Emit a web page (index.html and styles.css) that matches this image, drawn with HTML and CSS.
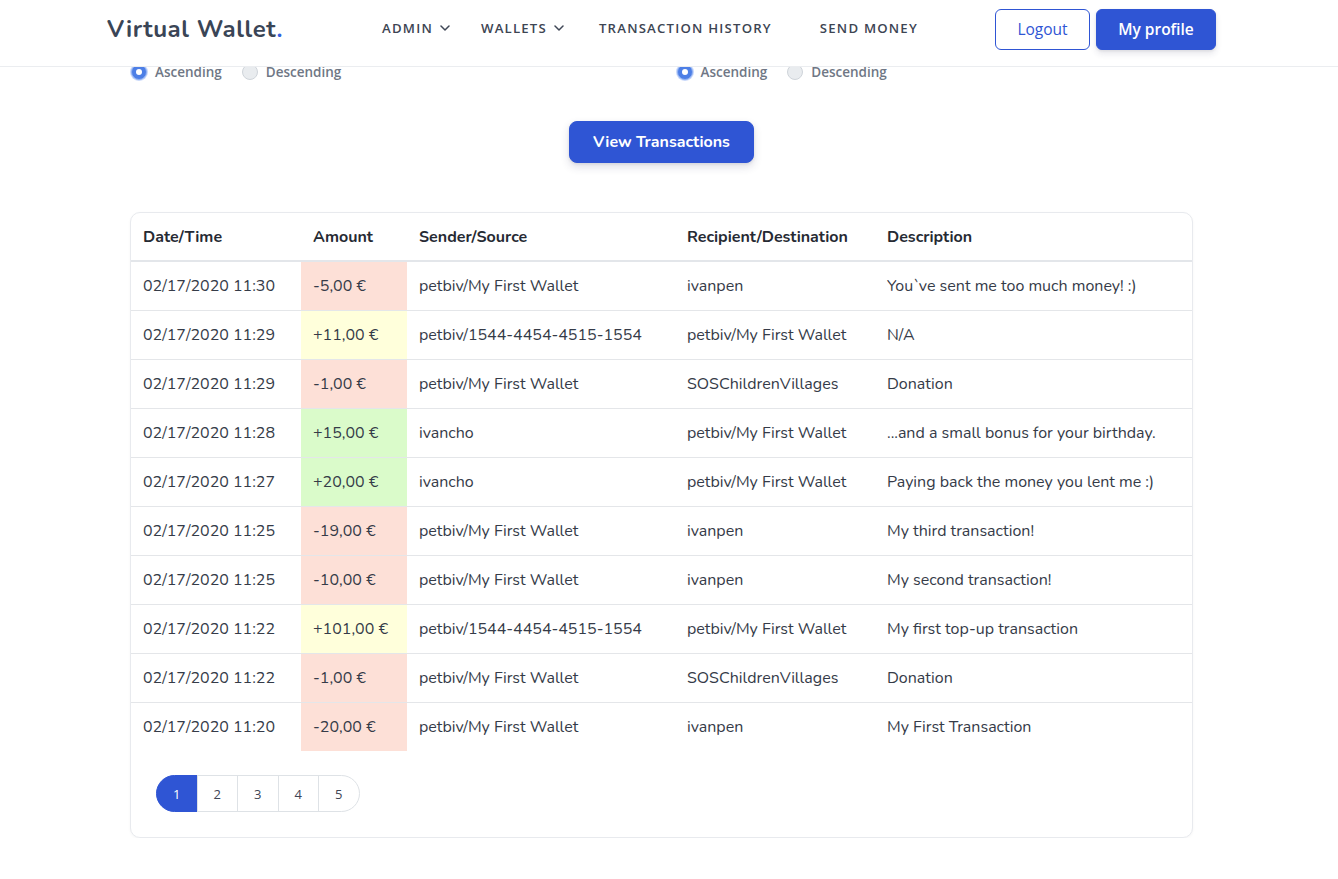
FILE: index.html
```html
<!DOCTYPE html>
<html lang="en">
<head>
<meta charset="utf-8">
<title>Virtual Wallet - Transaction History</title>
<link rel="stylesheet" href="styles.css">
</head>
<body>
<header class="topbar">
  <a class="brand">Virtual Wallet<span class="brand-dot">.</span></a>
  <nav class="mainnav">
    <a class="nav-item nav-admin">ADMIN <svg class="chev" viewBox="0 0 10 6" width="10" height="6"><path d="M1 1 L5 5 L9 1" fill="none" stroke="currentColor" stroke-width="1.5" stroke-linecap="round" stroke-linejoin="round"/></svg></a>
    <a class="nav-item nav-wallets">WALLETS <svg class="chev" viewBox="0 0 10 6" width="10" height="6"><path d="M1 1 L5 5 L9 1" fill="none" stroke="currentColor" stroke-width="1.5" stroke-linecap="round" stroke-linejoin="round"/></svg></a>
    <a class="nav-item nav-history">TRANSACTION HISTORY</a>
    <a class="nav-item nav-send">SEND MONEY</a>
  </nav>
  <div class="actions">
    <button class="btn btn-outline">Logout</button>
    <button class="btn btn-primary btn-profile">My profile</button>
  </div>
</header>

<main class="content">
  <div class="sort-row">
    <div class="sort-group">
      <label class="radio"><span class="radio-dot checked"></span>Ascending</label>
      <label class="radio"><span class="radio-dot"></span>Descending</label>
    </div>
    <div class="sort-group second">
      <label class="radio"><span class="radio-dot checked"></span>Ascending</label>
      <label class="radio"><span class="radio-dot"></span>Descending</label>
    </div>
  </div>

  <div class="view-wrap">
    <button class="btn btn-primary btn-view">View Transactions</button>
  </div>

  <section class="card">
    <table class="tx-table">
      <colgroup>
        <col class="c-date"><col class="c-amount"><col class="c-sender"><col class="c-recipient"><col class="c-desc">
      </colgroup>
      <thead>
        <tr><th>Date/Time</th><th>Amount</th><th>Sender/Source</th><th>Recipient/Destination</th><th>Description</th></tr>
      </thead>
      <tbody>
        <tr><td>02/17/2020 11:30</td><td class="amt neg">-5,00 €</td><td>petbiv/My First Wallet</td><td>ivanpen</td><td>You`ve sent me too much money! :)</td></tr>
        <tr><td>02/17/2020 11:29</td><td class="amt top">+11,00 €</td><td>petbiv/1544-4454-4515-1554</td><td>petbiv/My First Wallet</td><td>N/A</td></tr>
        <tr><td>02/17/2020 11:29</td><td class="amt neg">-1,00 €</td><td>petbiv/My First Wallet</td><td>SOSChildrenVillages</td><td>Donation</td></tr>
        <tr><td>02/17/2020 11:28</td><td class="amt pos">+15,00 €</td><td>ivancho</td><td>petbiv/My First Wallet</td><td>...and a small bonus for your birthday.</td></tr>
        <tr><td>02/17/2020 11:27</td><td class="amt pos">+20,00 €</td><td>ivancho</td><td>petbiv/My First Wallet</td><td>Paying back the money you lent me :)</td></tr>
        <tr><td>02/17/2020 11:25</td><td class="amt neg">-19,00 €</td><td>petbiv/My First Wallet</td><td>ivanpen</td><td>My third transaction!</td></tr>
        <tr><td>02/17/2020 11:25</td><td class="amt neg">-10,00 €</td><td>petbiv/My First Wallet</td><td>ivanpen</td><td>My second transaction!</td></tr>
        <tr><td>02/17/2020 11:22</td><td class="amt top">+101,00 €</td><td>petbiv/1544-4454-4515-1554</td><td>petbiv/My First Wallet</td><td>My first top-up transaction</td></tr>
        <tr><td>02/17/2020 11:22</td><td class="amt neg">-1,00 €</td><td>petbiv/My First Wallet</td><td>SOSChildrenVillages</td><td>Donation</td></tr>
        <tr><td>02/17/2020 11:20</td><td class="amt neg">-20,00 €</td><td>petbiv/My First Wallet</td><td>ivanpen</td><td>My First Transaction</td></tr>
      </tbody>
    </table>
    <ul class="pagination">
      <li class="page active">1</li>
      <li class="page">2</li>
      <li class="page">3</li>
      <li class="page">4</li>
      <li class="page">5</li>
    </ul>
  </section>
</main>
</body>
</html>
```

FILE: styles.css
```css
* { box-sizing: border-box; }

body {
  margin: 0;
  font-family: "Open Sans", "Noto Sans", Arial, sans-serif;
  color: #3a4150;
  background: #ffffff;
}

.topbar {
  position: fixed;
  top: 0;
  left: 0;
  right: 0;
  z-index: 10;
  height: 67px;
  background: #ffffff;
  border-bottom: 1px solid #ebedf0;
  display: flex;
  align-items: center;
  padding: 0 122px 0 107px;
}

.brand {
  font-family: "Nunito", "Lato", "Open Sans", sans-serif;
  font-size: 24px;
  font-weight: 700;
  letter-spacing: 0.6px;
  color: #3a4556;
  margin-top: -8px;
}
.brand-dot { color: #3160e0; }

.mainnav {
  display: flex;
  align-items: center;
  margin-left: 99px;
  margin-top: -10px;
}
.nav-item {
  display: flex;
  align-items: center;
  font-size: 13.2px;
  letter-spacing: 1.2px;
  color: #3d4553;
  font-weight: 600;
}
.chev { margin-left: 7px; color: #3f4756; }
.nav-wallets { margin-left: 31px; }
.nav-history { margin-left: 35px; }
.nav-send { margin-left: 48px; }

.actions {
  margin-left: auto;
  display: flex;
  align-items: center;
  gap: 6px;
  margin-top: -8px;
}

.btn {
  font-family: "Open Sans", "Noto Sans", sans-serif;
  font-size: 15.5px;
  border-radius: 6px;
  height: 41px;
  cursor: pointer;
}
.btn-outline {
  width: 95px;
  background: #ffffff;
  border: 1px solid #2f55d4;
  color: #2f55d4;
}
.btn-primary {
  background: #2f55d4;
  border: 1px solid #2f55d4;
  color: #ffffff;
  font-weight: 600;
  box-shadow: 0 4px 6px rgba(50, 50, 93, 0.11), 0 1px 3px rgba(0, 0, 0, 0.08);
}
.btn-profile { width: 120px; }

.content {
  padding-top: 63px;
  margin-left: 130px;
  width: 1063px;
}

.sort-row {
  display: grid;
  grid-template-columns: 1fr 1fr;
  height: 18px;
}
.sort-group {
  display: flex;
  align-items: center;
  padding-left: 1px;
}
.sort-group.second { padding-left: 15px; }

.radio {
  display: flex;
  align-items: center;
  font-size: 13.5px;
  font-weight: 600;
  color: #6f7785;
  margin-right: 20px;
}
.radio-dot {
  width: 16px;
  height: 16px;
  border-radius: 50%;
  background: #e9ecef;
  border: 1px solid #cfd4da;
  margin-right: 8px;
  position: relative;
}
.radio-dot.checked {
  background: #4d7fe6;
  border-color: #8fb0f2;
  box-shadow: 0 0 0 1px #c8d8fa;
}
.radio-dot.checked::after {
  content: "";
  position: absolute;
  left: 4px;
  top: 4px;
  width: 6px;
  height: 6px;
  border-radius: 50%;
  background: #ffffff;
}

.view-wrap {
  display: flex;
  justify-content: center;
  margin-top: 40px;
}
.btn-view {
  width: 185px;
  height: 42px;
  font-size: 16px;
  border-radius: 8px;
  font-family: "Nunito", "Lato", "Open Sans", sans-serif;
  font-weight: 700;
  box-shadow: 0 4px 8px rgba(50, 50, 93, 0.16), 0 1px 3px rgba(0, 0, 0, 0.08);
}

.card {
  margin-top: 49px;
  border: 1px solid #e8eaee;
  border-radius: 10px;
  box-shadow: 0 1px 3px rgba(0, 0, 0, 0.04);
  padding-bottom: 25px;
  background: #fff;
}

.tx-table {
  width: 100%;
  border-collapse: collapse;
  table-layout: fixed;
  font-family: "Nunito", "Lato", "Open Sans", sans-serif;
  font-size: 16px;
}
.c-date { width: 170px; }
.c-amount { width: 106px; }
.c-sender { width: 268px; }
.c-recipient { width: 200px; }
.c-desc { width: auto; }

.tx-table th {
  height: 48px;
  text-align: left;
  font-weight: 700;
  color: #262a33;
  padding: 0 12px;
  border-bottom: 2px solid #e3e6ea;
}
.tx-table td {
  height: 49px;
  padding: 0 12px;
  border-bottom: 1px solid #e4e6e9;
  color: #353b48;
  white-space: nowrap;
}
.tx-table tr:last-child td { border-bottom: none; }

.amt.neg { background: #fde0d7; }
.amt.top { background: #ffffdb; }
.amt.pos { background: #dafbca; }

.pagination {
  list-style: none;
  margin: 24px 0 0 25px;
  padding: 0;
  display: flex;
}
.page {
  width: 41.5px;
  height: 37px;
  display: flex;
  align-items: center;
  justify-content: center;
  font-size: 13px;
  color: #3f4656;
  border: 1px solid #dee2e6;
  margin-left: -1px;
}
.page:first-child {
  border-radius: 19px 0 0 19px;
  margin-left: 0;
}
.page:last-child { border-radius: 0 19px 19px 0; }
.page.active {
  background: #2f55d4;
  border-color: #2f55d4;
  color: #ffffff;
}
```
